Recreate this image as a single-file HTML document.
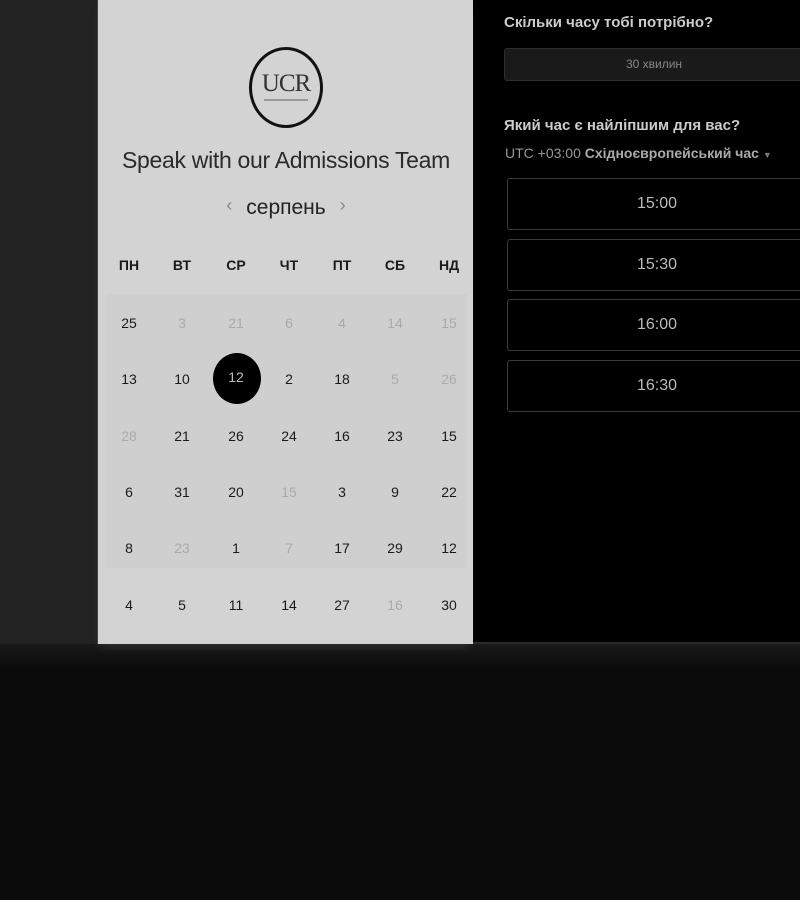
<!DOCTYPE html>
<html><head><meta charset="utf-8"><style>
*{margin:0;padding:0;box-sizing:border-box}
body{width:800px;height:900px;background:#0b0b0b;position:relative;overflow:hidden;font-family:"Liberation Sans",sans-serif}
.left{position:absolute;left:0;top:0;width:97px;height:644px;background:#222}
.right{position:absolute;left:473px;top:0;width:327px;height:644px;background:#000;border-bottom:2px solid #2a2a2a}
.card{position:absolute;left:97px;top:0;width:376px;height:644px;background:#d3d3d3;border-left:1px solid #444;box-shadow:0 6px 8px -4px rgba(80,80,80,.5)}
.shade{position:absolute;left:0;top:644px;width:800px;height:24px;background:linear-gradient(#1a1a1a,#0b0b0b)}
.logo{position:absolute;left:151px;top:47px;width:74px;height:81px;border:3px solid #111;border-radius:50%;text-align:center}
.logo b{display:block;font:400 25px "Liberation Serif",serif;color:#333;margin-top:20px;letter-spacing:-1px}
.logo i{display:block;height:2px;width:44px;margin:1px auto;background:#999}
.title{position:absolute;left:0;width:376px;top:147px;text-align:center;font-size:23px;color:#2a2a2a;letter-spacing:-0.3px}
.month{position:absolute;left:0;width:376px;top:196px;text-align:center;font-size:21px;color:#222}
.month span{color:#888;font-size:18px;margin:0 14px;position:relative;top:-3px}
.grid{position:absolute;left:8px;top:294px;width:361px;height:274px;background:#cfcfcf}
.n{position:absolute;width:40px;margin-left:-20px;text-align:center;font-size:14px;color:#1a1a1a}
.h{font-weight:bold;font-size:14px}
.g{color:#aaa}
.sel{position:absolute;left:115px;top:353px;width:48px;height:51px;border-radius:50%;background:#000}
.q{position:absolute;left:504px;font-size:15px;font-weight:bold;color:#ccc}
.dur{position:absolute;left:504px;top:48px;width:300px;height:33px;background:#1a1a1a;border:1px solid #2e2e2e;border-radius:3px;color:#888;font-size:12px;text-align:center;line-height:31px}
.tz{position:absolute;left:505px;top:145px;font-size:14px;color:#999}
.tz b{color:#aaa}
.slot{position:absolute;left:507px;width:300px;height:52px;border:1px solid #3a3a3a;border-radius:3px;color:#bbb;font-size:16px;text-align:center;line-height:50px}
</style></head><body>
<div class="left"></div><div class="shade"></div>
<div class="right"></div>
<div class="card">
<div class="logo"><b>UCR</b><i></i></div>
<div class="title">Speak with our Admissions Team</div>
<div class="month"><span>‹</span>серпень<span>›</span></div>
<div class="grid"></div>
<div class="sel"></div>
</div>
<div id="cal"></div>
<script>
var xs=[129,182,236,289,342,395,449],ys=[323,379,436,492,548,605];
var h=["ПН","ВТ","СР","ЧТ","ПТ","СБ","НД"];
var d=[["25","3g","21g","6g","4g","14g","15g"],["13","10","12w","2","18","5g","26g"],["28g","21","26","24","16","23","15"],["6","31","20","15g","3","9","22"],["8","23g","1","7g","17","29","12"],["4","5","11","14","27","16g","30"]];
var s="";
h.forEach(function(t,i){s+='<div class="n h" style="left:'+xs[i]+'px;top:257px">'+t+'</div>'});
d.forEach(function(r,j){r.forEach(function(t,i){var c="",v=t;if(t.slice(-1)=="g"){c="g";v=t.slice(0,-1)}var st="";if(t.slice(-1)=="w"){v=t.slice(0,-1);st="color:#bbb;"}s+='<div class="n '+c+'" style="'+st+'left:'+xs[i]+'px;top:'+(ys[j]-8-(st?2:0))+'px">'+v+'</div>'})});
document.getElementById("cal").innerHTML=s;
</script>
<div class="q" style="top:14px">Скільки часу тобі потрібно?</div>
<div class="dur">30 хвилин</div>
<div class="q" style="top:117px">Який час є найліпшим для вас?</div>
<div class="tz">UTC +03:00 <b>Східноєвропейський час</b> <span style="font-size:9px;color:#777">▼</span></div>
<div class="slot" style="top:178px">15:00</div>
<div class="slot" style="top:239px">15:30</div>
<div class="slot" style="top:299px">16:00</div>
<div class="slot" style="top:360px">16:30</div>
</body></html>
